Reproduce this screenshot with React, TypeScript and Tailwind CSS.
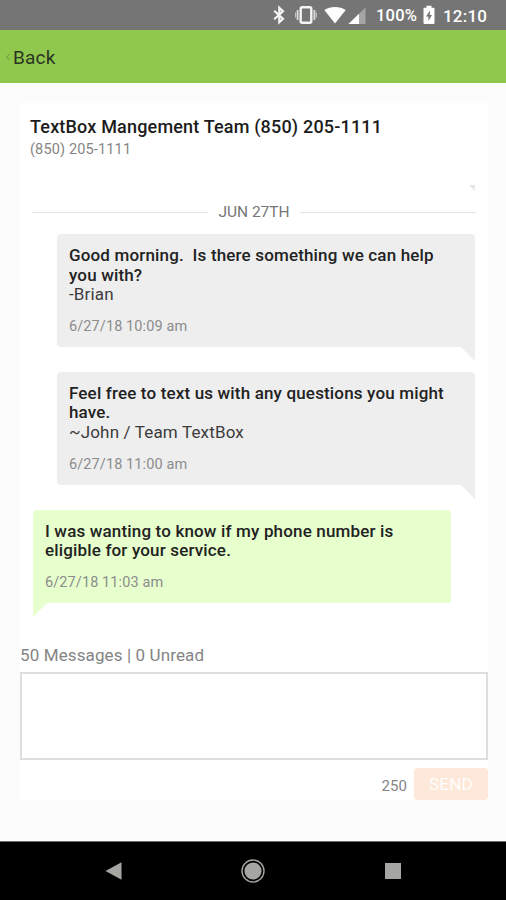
import clsx from 'clsx';

type Message = {
  id: number;
  mine: boolean;
  lines: string[];
  signature?: string;
  time: string;
};

const messages: Message[] = [
  {
    id: 1,
    mine: true,
    lines: ['Good morning.  Is there something we can help', 'you with?'],
    signature: '-Brian',
    time: '6/27/18 10:09 am',
  },
  {
    id: 2,
    mine: true,
    lines: ['Feel free to text us with any questions you might', 'have.'],
    signature: '~John / Team TextBox',
    time: '6/27/18 11:00 am',
  },
  {
    id: 3,
    mine: false,
    lines: ['I was wanting to know if my phone number is', 'eligible for your service.'],
    time: '6/27/18 11:03 am',
  },
];

function StatusBar() {
  return (
    <div className="flex h-[30px] shrink-0 items-center justify-end bg-[#757575] pr-[18px] text-white">
      <svg className="mr-[8px]" width="14" height="20" viewBox="0 0 14 20" fill="none" stroke="#f4f4f4" strokeWidth="2.2">
        <path d="M2.2 5.8L11 13.8L7.3 17.3V2.7L11 6.2L2.2 14.2" />
      </svg>
      <svg className="mr-[6px]" width="24" height="20" viewBox="0 0 24 20" fill="none" stroke="#f4f4f4">
        <rect x="6.7" y="2.2" width="10.6" height="15.6" rx="1.5" strokeWidth="2.4" />
        <path d="M3.6 5v10M20.4 5v10" strokeWidth="1.8" stroke="#dcdcdc" />
        <path d="M1.6 7.5v5M22.4 7.5v5" strokeWidth="1.2" stroke="#c4c4c4" />
      </svg>
      <svg className="mr-[2px]" width="22" height="20" viewBox="0 0 22 20" fill="#fff">
        <path d="M0.3 5C6 0.9 16 0.9 21.7 5L11 18.5Z" />
      </svg>
      <svg className="mr-[10px]" width="18" height="20" viewBox="0 0 18 20">
        <path d="M0.5 19L17.5 2.5V19Z" fill="#a5a5a5" />
        <path d="M0.5 19L11 8.8V19Z" fill="#fff" />
      </svg>
      <span className="mr-[5px] w-[42px] whitespace-nowrap pt-[2px] text-[16.5px] leading-5 font-medium tracking-[0.2px]">100%</span>
      <svg className="mr-[8px]" width="12" height="20" viewBox="0 0 12 20">
        <path d="M3.5 0.8h5v2h2a1 1 0 0 1 1 1V18a1 1 0 0 1-1 1h-9a1 1 0 0 1-1-1V3.8a1 1 0 0 1 1-1h2Z" fill="#fff" />
        <path d="M7 5.5L3 11.5h2.4V16L9 10H6.8Z" fill="#757575" />
      </svg>
      <span className="w-[45px] whitespace-nowrap pt-px text-[17px] leading-5 font-medium tracking-[0.2px]">12:10</span>
    </div>
  );
}

function Header() {
  return (
    <header className="flex h-[53px] shrink-0 items-center bg-[#90c84e] pl-[6px] text-[#2b3524]">
      <svg className="mr-[3px]" width="4" height="8" viewBox="0 0 4 8" fill="none" stroke="#5f8738" strokeWidth="0.8">
        <path d="M3.4 1L0.8 4L3.4 7" />
      </svg>
      <span className="pt-[3px] text-[19px] leading-6 tracking-[0.2px]">Back</span>
    </header>
  );
}

function Bubble({ message }: { message: Message }) {
  const { mine, lines, signature, time } = message;
  return (
    <div
      className={clsx(
        'relative w-[418px] pt-[12px] pb-[11px] pl-[12px]',
        mine ? 'self-end rounded-[4px] rounded-br-none bg-[#eeeeee]' : 'self-start rounded-[4px] rounded-bl-none bg-[#e7ffcd]'
      )}
    >
      <div className="text-[17px] leading-[19.6px] tracking-[0.16px] text-[#222222]">
        {lines.map((line) => (
          <p key={line} className="font-medium whitespace-pre">{line}</p>
        ))}
        {signature && <p className="text-[#3c3c3c]">{signature}</p>}
      </div>
      <p className="mt-[13px] text-[14.5px] leading-[18px] tracking-[0.1px] text-[#8c8c8c]">{time}</p>
      <svg
        className={clsx('absolute top-full', mine ? 'right-0' : 'left-0 -scale-x-100')}
        width="14"
        height="14"
        viewBox="0 0 14 14"
        fill={mine ? '#eeeeee' : '#e7ffcd'}
      >
        <path d="M0 0H14V14Z" />
      </svg>
    </div>
  );
}

function Composer() {
  return (
    <div>
      <p className="text-[17px] leading-5 tracking-[0.12px] text-[#848484]">50 Messages | 0 Unread</p>
      <textarea className="mt-[7px] block h-[88px] w-full resize-none border-2 border-[#dedede] bg-white p-2 outline-none" />
      <div className="mt-[8px] flex items-start justify-end">
        <span className="mr-[7px] pt-[9px] text-[15px] leading-[18px] tracking-[0.1px] text-[#858585]">250</span>
        <button className="h-[32px] w-[74px] rounded-[4px] bg-[#fde8d9] text-[17px] leading-[30px] tracking-[0.2px] text-[#fffdfb]">
          SEND
        </button>
      </div>
    </div>
  );
}

function NavBar() {
  return (
    <nav className="flex h-[59px] shrink-0 items-center justify-center gap-[116px] border-t border-[#707070] bg-black">
      <svg width="24" height="24" viewBox="0 0 24 24" fill="#a5a6a1">
        <path d="M4.5 12L20.5 3.3V20.7Z" />
      </svg>
      <svg width="24" height="24" viewBox="0 0 24 24" fill="none">
        <circle cx="12" cy="12" r="11" stroke="#a5a6a1" strokeWidth="1.4" />
        <circle cx="12" cy="12" r="8.6" fill="#a5a6a1" />
      </svg>
      <svg width="24" height="24" viewBox="0 0 24 24" fill="#a5a6a1">
        <rect x="4" y="4" width="16" height="16" />
      </svg>
    </nav>
  );
}

export default function App() {
  return (
    <div className="flex h-[900px] w-[506px] flex-col overflow-hidden bg-[#fcfcfc] font-[Roboto,sans-serif]">
      <StatusBar />
      <Header />
      <main className="flex-1 px-5 pt-5 pr-[18px]">
        <section className="h-[697px] bg-white">
          <div className="h-[97px] px-[10px] pt-[14px]">
            <h1 className="text-[18px] leading-5 font-medium tracking-[0.18px] whitespace-nowrap text-[#1c1c1c]">
              TextBox Mangement Team (850) 205-1111
            </h1>
            <p className="mt-[4px] text-[14.5px] leading-[18px] tracking-[0.15px] text-[#858585]">(850) 205-1111</p>
            <div className="mt-[26px] flex justify-end pr-[3px]">
              <svg width="6" height="6" viewBox="0 0 6 6" fill="#e6e6e6">
                <path d="M0 0H6V6Z" />
              </svg>
            </div>
          </div>
          <div className="flex items-center gap-[10px] pr-3 pl-[12px]">
            <div className="h-px flex-1 bg-[#e4e4e4]" />
            <span className="pt-px text-[15.5px] leading-[23px] text-[#777777]">JUN 27TH</span>
            <div className="h-px flex-1 bg-[#e4e4e4]" />
          </div>
          <div className="mt-[10px] flex flex-col gap-[25px] pr-[13px] pl-[13px]">
            {messages.map((message) => (
              <Bubble key={message.id} message={message} />
            ))}
          </div>
          <div className="mt-[42px]">
            <Composer />
          </div>
        </section>
      </main>
      <NavBar />
    </div>
  );
}
